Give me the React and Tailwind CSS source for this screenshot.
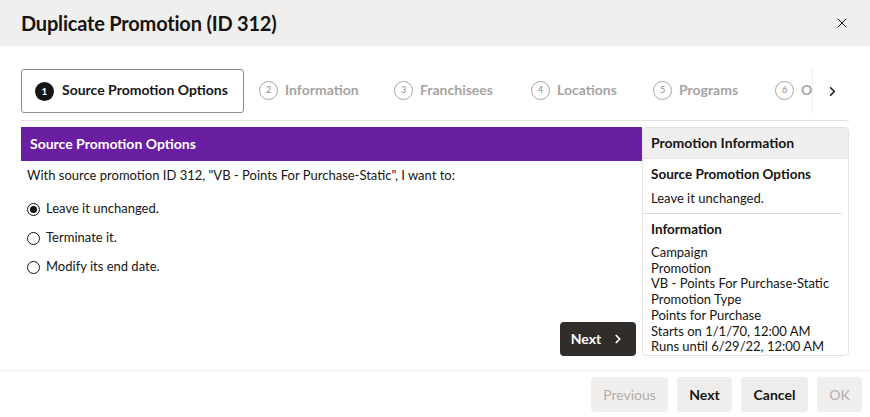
import React from "react";
import { X, ChevronRight } from "lucide-react";

const steps = [
  { n: 2, label: "Information", w: "w-[135px]" },
  { n: 3, label: "Franchisees", w: "w-[137px]" },
  { n: 4, label: "Locations", w: "w-[122px]" },
  { n: 5, label: "Programs", w: "w-[122px]" },
];

const options = ["Leave it unchanged.", "Terminate it.", "Modify its end date."];

const infoLines = [
  "Campaign",
  "Promotion",
  "VB - Points For Purchase-Static",
  "Promotion Type",
  "Points for Purchase",
  "Starts on 1/1/70, 12:00 AM",
  "Runs until 6/29/22, 12:00 AM",
];

const StepCircle = ({ n }) => (
  <span className="w-[19px] h-[19px] rounded-full border border-[#a8a6a4] text-[9px] text-[#8c8a88] flex items-center justify-center shrink-0 -translate-y-[1px]">
    {n}
  </span>
);

const App = () => {
  return (
    <div className="w-[870px] h-[417px] bg-white flex flex-col text-[#161513] font-['Lato','Noto_Sans',sans-serif] overflow-hidden">
      {/* header */}
      <div className="h-[46px] bg-[#f1efed] flex items-center justify-between pl-[21px] pr-[20px] shrink-0">
        <h1 className="text-[20px] font-bold tracking-[-0.2px]">Duplicate Promotion (ID 312)</h1>
        <X size={16} strokeWidth={1.5} className="text-[#161513]" />
      </div>

      {/* body */}
      <div className="px-[21px] pt-[23px] flex-1">
        {/* train */}
        <div className="flex items-center h-[44px]">
          <div className="w-[223px] h-[44px] border border-[#8e8c8a] rounded-[3px] flex items-center gap-[8px] pl-[13px] pb-[3px] shrink-0">
            <span className="w-[19px] h-[19px] rounded-full bg-[#161513] text-white text-[10px] font-bold flex items-center justify-center mt-[3px]">1</span>
            <span className="text-[14px] font-bold">Source Promotion Options</span>
          </div>
          <div className="flex items-center pl-[15px] w-[568px] overflow-hidden shrink-0">
            {steps.map((s) => (
              <div key={s.n} className={`flex items-center gap-[7px] shrink-0 ${s.w}`}>
                <StepCircle n={s.n} />
                <span className="text-[14px] font-bold text-[#a6a4a2] -translate-y-[2px]">{s.label}</span>
              </div>
            ))}
            <div className="flex items-center gap-[7px] shrink-0">
              <StepCircle n={6} />
              <span className="text-[14px] font-bold text-[#a6a4a2] -translate-y-[2px]">O</span>
            </div>
          </div>
          <div className="h-[44px] border-l border-[#f1efed] flex items-center pl-[12px]">
            <ChevronRight size={15} strokeWidth={2.5} />
          </div>
        </div>

        <div className="mt-[7px] border-t border-[#e4e2e0]" />

        {/* content */}
        <div className="mt-[6px] flex h-[229px]">
          <div className="w-[621px] flex flex-col">
            <div className="h-[34px] bg-[#6a1fa3] text-white text-[14px] font-bold flex items-center pl-[9px] pb-[2px]">
              Source Promotion Options
            </div>
            <p className="text-[13px] mt-[5px] pl-[6px]">
              With source promotion ID 312, "VB - Points For Purchase-Static", I want to:
            </p>
            <div className="mt-[16px] flex flex-col gap-[12px] pl-[6px]">
              {options.map((o, i) => (
                <label key={o} className="flex items-center gap-[6px] text-[13px] h-[17px]">
                  <span className="w-[13px] h-[13px] rounded-full border border-[#161513] flex items-center justify-center -translate-y-[1px]">
                    {i === 0 && <span className="w-[7px] h-[7px] rounded-full bg-[#161513]" />}
                  </span>
                  <span className="-translate-y-[1px]">{o}</span>
                </label>
              ))}
            </div>
            <div className="mt-auto flex justify-end pr-[6px]">
              <button className="h-[34px] w-[76px] bg-[#312d2a] text-white text-[14px] font-bold rounded-[4px] flex items-center justify-center gap-[10px] pb-[2px]">
                Next <ChevronRight size={14} strokeWidth={3} className="translate-y-[1px]" />
              </button>
            </div>
          </div>

          <div className="w-[207px] border border-[#e4e2e0] rounded-[4px] overflow-hidden flex flex-col">
            <div className="h-[34px] bg-[#efefef] border-b border-[#e4e2e0] text-[14px] font-bold flex items-center pl-[8px] pb-[1px]">
              Promotion Information
            </div>
            <div className="px-[8px] pt-[7px] pb-[7px] border-b border-[#dcdcdc] mr-[6px]">
              <div className="text-[13.5px] font-bold leading-[17px]">Source Promotion Options</div>
              <div className="text-[13px] leading-[16px] mt-[7px]">Leave it unchanged.</div>
            </div>
            <div className="px-[8px] pt-[7px]">
              <div className="text-[13.5px] font-bold leading-[17px]">Information</div>
              <div className="mt-[7px] text-[13px] leading-[15.7px]">
                {infoLines.map((l) => (
                  <div key={l}>{l}</div>
                ))}
              </div>
            </div>
          </div>
        </div>
      </div>

      {/* footer */}
      <div className="h-[47px] border-t border-[#eeedec] flex items-center justify-end gap-[9px] pr-[8px] shrink-0">
        <button className="h-[35px] w-[77px] rounded-[4px] bg-[#f1efed] text-[#b0aeac] text-[14px]">Previous</button>
        <button className="h-[35px] w-[55px] rounded-[4px] bg-[#efedeb] text-[14px] font-bold">Next</button>
        <button className="h-[35px] w-[67px] rounded-[4px] bg-[#efedeb] text-[14px] font-bold">Cancel</button>
        <button className="h-[35px] w-[45px] rounded-[4px] bg-[#f1efed] text-[#b0aeac] text-[14px]">OK</button>
      </div>
    </div>
  );
};

export default App;
